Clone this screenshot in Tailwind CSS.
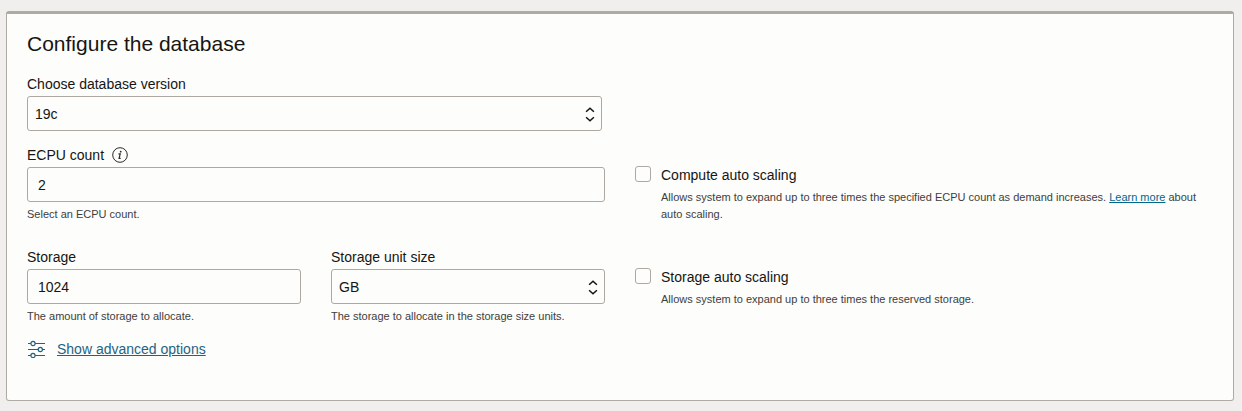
<!DOCTYPE html>
<html lang="en">
<head>
<meta charset="utf-8">
<meta name="viewport" content="width=device-width, initial-scale=1">
<title>Configure the database</title>
<script src="https://cdn.jsdelivr.net/npm/@tailwindcss/browser@4"></script>
</head>
<body class="min-h-screen bg-[#f1efed] pt-[11px] pr-2 pb-[10px] pl-[6px] font-['Liberation_Sans',Arial,sans-serif] text-sm text-[#161513]">
<main class="rounded-[3px] border border-t-3 border-[#b0aaa4] bg-[#fdfdfb] px-5 pt-4 pb-[41px]">
  <form>
    <h1 class="text-[21px] leading-7">Configure the database</h1>

    <div class="mt-4 grid grid-cols-2 gap-x-[30px]">
      <div class="pr-[3px]">
        <label for="version" class="block leading-5">Choose database version</label>
        <div class="relative mt-[2px]">
          <select id="version" class="block h-[35px] w-full appearance-none rounded-[3px] border border-[#aea8a2] bg-transparent px-[7px]">
            <option>19c</option>
          </select>
          <svg class="pointer-events-none absolute top-[10px] right-[7px] h-4 w-[10px]" viewBox="0 0 10 16" fill="none" stroke="#161513" stroke-width="1.5" aria-hidden="true"><path d="M1.1 5.8 5 2.2l3.9 3.6M1.1 11.2 5 14.8l3.9-3.6"/></svg>
        </div>
      </div>
    </div>

    <div class="mt-[14px] grid grid-cols-2 gap-x-[30px]">
      <div>
        <div class="flex h-5 items-center gap-2">
          <label for="ecpu" class="leading-5">ECPU count</label>
          <button type="button" aria-label="About ECPU count">
            <svg class="block size-4" viewBox="0 0 16 16" fill="none" stroke="#2b2a28" aria-hidden="true"><circle cx="8" cy="8" r="7.3"/><path d="M6.5 6.9h1.7L7.1 11.3h1.6" stroke-width="1.2"/><circle cx="8.7" cy="4.7" r=".9" fill="#2b2a28" stroke="none"/></svg>
          </button>
        </div>
        <input id="ecpu" type="text" value="2" aria-describedby="ecpu-hint" class="mt-[2px] block h-[35px] w-full rounded-[3px] border border-[#aea8a2] bg-transparent px-[10px]">
        <p id="ecpu-hint" class="mt-1 text-[11px] leading-4 text-[#403e3b]">Select an ECPU count.</p>
      </div>
      <div class="flex items-start gap-[10px] pt-5">
        <input id="compute" type="checkbox" aria-describedby="compute-hint" class="mt-px size-4 shrink-0 appearance-none rounded-[3px] border border-[#aea8a2] checked:bg-[#227e9e]">
        <div>
          <label for="compute" class="block leading-5">Compute auto scaling</label>
          <p id="compute-hint" class="mt-1 text-[11px] leading-[17px] text-[#403e3b]">Allows system to expand up to three times the specified ECPU count as demand increases. <a href="#" class="text-[#00688c] underline">Learn more</a> about auto scaling.</p>
        </div>
      </div>
    </div>

    <div class="mt-6 grid grid-cols-2 gap-x-[30px]">
      <div class="grid grid-cols-2 gap-x-[30px]">
        <div>
          <label for="storage" class="block leading-5">Storage</label>
          <input id="storage" type="text" value="1024" aria-describedby="storage-hint" class="mt-[2px] block h-[35px] w-full rounded-[3px] border border-[#aea8a2] bg-transparent px-[10px]">
          <p id="storage-hint" class="mt-1 text-[11px] leading-4 text-[#403e3b]">The amount of storage to allocate.</p>
        </div>
        <div>
          <label for="unit" class="block leading-5">Storage unit size</label>
          <div class="relative mt-[2px]">
            <select id="unit" aria-describedby="unit-hint" class="block h-[35px] w-full appearance-none rounded-[3px] border border-[#aea8a2] bg-transparent px-[7px]">
              <option>GB</option>
            </select>
            <svg class="pointer-events-none absolute top-[10px] right-[7px] h-4 w-[10px]" viewBox="0 0 10 16" fill="none" stroke="#161513" stroke-width="1.5" aria-hidden="true"><path d="M1.1 5.8 5 2.2l3.9 3.6M1.1 11.2 5 14.8l3.9-3.6"/></svg>
          </div>
          <p id="unit-hint" class="mt-1 text-[11px] leading-4 text-[#403e3b]">The storage to allocate in the storage size units.</p>
        </div>
      </div>
      <div class="flex items-start gap-[10px] pt-5">
        <input id="autostorage" type="checkbox" aria-describedby="autostorage-hint" class="mt-px size-4 shrink-0 appearance-none rounded-[3px] border border-[#aea8a2] checked:bg-[#227e9e]">
        <div>
          <label for="autostorage" class="block leading-5">Storage auto scaling</label>
          <p id="autostorage-hint" class="mt-1 text-[11px] leading-[17px] text-[#403e3b]">Allows system to expand up to three times the reserved storage.</p>
        </div>
      </div>
    </div>

    <div class="mt-[15px] flex h-5 items-center gap-3 text-[#1f6383]">
      <svg class="h-[18px] w-[18px]" viewBox="0 0 18 18" fill="none" stroke="currentColor" stroke-width="1.2" aria-hidden="true"><path d="M1 3.5h2.9M8.1 3.5H18M1 9.5h10.2M15.4 9.5H18M1 15.5h2.9M8.1 15.5H18"/><circle cx="6" cy="3.5" r="2.1"/><circle cx="13.3" cy="9.5" r="2.1"/><circle cx="6" cy="15.5" r="2.1"/></svg>
      <a href="#" class="leading-5 underline">Show advanced options</a>
    </div>
  </form>
</main>
</body>
</html>
